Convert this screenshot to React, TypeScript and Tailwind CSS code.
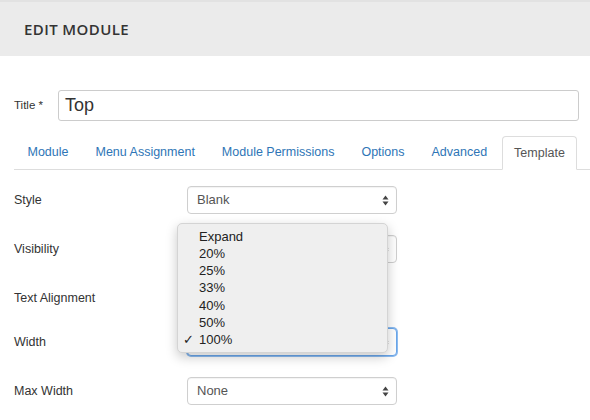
import React from 'react';

const tabs = ['Module', 'Menu Assignment', 'Module Permissions', 'Options', 'Advanced'];
const widths = ['Expand', '20%', '25%', '33%', '40%', '50%', '100%'];

function Arrows() {
  return (
    <svg width="7" height="11" viewBox="0 0 7 11" className="shrink-0">
      <path d="M3.5 0.5 L6.5 4.5 L0.5 4.5 Z" fill="#444" />
      <path d="M3.5 10.5 L6.5 6.5 L0.5 6.5 Z" fill="#444" />
    </svg>
  );
}

function Select({ value, focused }: { value?: string; focused?: boolean }) {
  return (
    <div
      className={
        'flex h-[28px] w-[210px] items-center justify-between rounded-[4px] border bg-white pl-[9px] pr-[7px] text-[13px] text-[#555] ' +
        (focused
          ? 'border-[#6aa6ea] shadow-[0_0_0_1px_#8dbcf0]'
          : 'border-[#cfcfcf] shadow-[inset_0_1px_1px_rgba(0,0,0,0.05)]')
      }
    >
      <span>{value}</span>
      <Arrows />
    </div>
  );
}

function Row({ label, children, className }: { label: string; children?: React.ReactNode; className?: string }) {
  return (
    <div className={'flex h-[28px] items-center ' + (className ?? '')}>
      <div className="w-[187px] shrink-0 pl-[14px] text-[12.5px] text-[#333]">{label}</div>
      {children}
    </div>
  );
}

export default function App() {
  return (
    <div className="h-[420px] w-[590px] overflow-hidden bg-white" style={{ fontFamily: '"Liberation Sans", Arial, sans-serif' }}>
      <div className="flex h-[56px] items-center border-t-2 border-[#e2e2e2] bg-[#ebebeb] pl-[24px]">
        <h1 className="text-[15px] font-semibold uppercase tracking-[0.4px] text-[#333]" style={{ fontFamily: '"Open Sans", sans-serif' }}>
          Edit Module
        </h1>
      </div>

      <div className="mt-[34px] flex items-center pr-[11px]">
        <label className="w-[58px] pl-[14px] text-[11.5px] text-[#333]">Title *</label>
        <div className="flex h-[31px] flex-1 items-center rounded-[3px] border border-[#cccccc] px-[6px] text-[18px] text-[#333]">
          Top
        </div>
      </div>

      <div className="ml-[14px] mt-[15px] flex h-[34px] items-end border-b border-[#dddddd] text-[12.5px]">
        <div className="flex h-full items-center">
          {tabs.map((t) => (
            <div key={t} className="px-[13.5px] text-[#2e75b6]">
              {t}
            </div>
          ))}
          <div className="-mb-px ml-[1px] flex h-[34px] items-center rounded-t-[4px] border border-b-white border-[#dddddd] bg-white px-[11.5px] text-[#555]">
            Template
          </div>
        </div>
      </div>

      <div className="relative mt-[16px]">
        <Row label="Style">
          <Select value="Blank" />
        </Row>
        <Row label="Visibility" className="mt-[21px]">
          <Select />
        </Row>
        <Row label="Text Alignment" className="mt-[21px]" />
        <Row label="Width" className="mt-[16px]">
          <Select focused />
        </Row>
        <Row label="Max Width" className="mt-[21px]">
          <Select value="None" />
        </Row>

        <div className="absolute left-[177px] top-[37px] w-[211px] rounded-[5px] border border-[#d4d4d4] bg-[#efefef] pb-[4px] pt-[4px] text-[13px] text-[#222] shadow-[0_4px_12px_rgba(0,0,0,0.22)]">
          {widths.map((w) => (
            <div key={w} className="flex h-[17.2px] items-center">
              <span className="w-[21px] pl-[5px] text-[13px]">{w === '100%' ? '✓' : ''}</span>
              <span>{w}</span>
            </div>
          ))}
        </div>
      </div>
    </div>
  );
}
